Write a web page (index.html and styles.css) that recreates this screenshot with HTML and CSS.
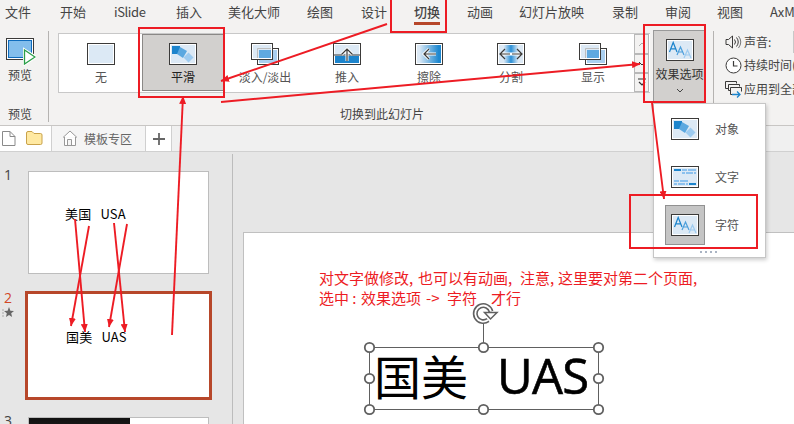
FILE: index.html
```html
<!DOCTYPE html>
<html lang="zh-CN">
<head>
<meta charset="utf-8">
<title>切换</title>
<link rel="stylesheet" href="styles.css">
</head>
<body>
<svg class="defs" width="0" height="0">
  <defs>
    <linearGradient id="wipe"><stop offset=".1" stop-color="#dce9f5"/><stop offset=".9" stop-color="#1e88d0"/></linearGradient>
    <linearGradient id="split"><stop offset="0" stop-color="#dce9f5"/><stop offset=".2" stop-color="#dce9f5"/><stop offset=".5" stop-color="#2a8fd6"/><stop offset=".8" stop-color="#dce9f5"/><stop offset="1" stop-color="#dce9f5"/></linearGradient>
    <marker id="head" viewBox="0 0 8 7" refX="8" refY="3.500" markerWidth="8" markerHeight="7" markerUnits="userSpaceOnUse" orient="auto"><path d="M0 0L8 3.500L0 7z" fill="#ed1c24"/></marker>
    <symbol id="frame" viewBox="0 0 28 22"><rect x=".5" y=".5" width="27" height="21" fill="#fff" stroke="#3b3a39"/><rect x="2" y="2" width="24" height="18" fill="#dce9f5"/></symbol>
    <symbol id="morph" viewBox="0 0 28 22"><use href="#frame" width="28" height="22"/><path d="M3 3h8v8H3z" fill="#1c84cc"/><path d="M11 4l7 4-4 7-6-4z" fill="#5ba8e0"/><path d="M19.500 9.500l5 5-5 5-5-5z" fill="#9dcbf0"/></symbol>
    <symbol id="chars" viewBox="0 0 28 22"><use href="#frame" width="28" height="22"/><g fill="none" stroke-width="1.200"><path d="M3.500 13L7.200 3.500L11 13M5 9.800h4.500" stroke="#1c84cc"/><path d="M11 16L14.500 8L18 16M12.500 13h4" stroke="#4c9fdc"/><path d="M18 19L21.500 11L25 19M19.500 16h4" stroke="#9dcbf0"/></g></symbol>
    <symbol id="lines" viewBox="0 0 28 22"><use href="#frame" width="28" height="22"/><path d="M3 3h7v2H3zM18 17h7v2h-7z" fill="#1c84cc"/><path d="M11 3h5v2h-5zM17 3h8v2h-8zM11 6h3v2h-3zM15 6h7v2h-7zM23 6h2v2h-2zM3 14h5v2H3zM9 14h8v2H9zM3 17h3v2H3zM7 17h7v2H7zM15 17h2v2h-2z" fill="#8cc1ee"/></symbol>
    <symbol id="fade" viewBox="0 0 28 22"><rect x="6.500" y="5.500" width="21" height="16" fill="#fff" stroke="#3b3a39"/><rect x="8" y="7" width="18" height="13" fill="#a9cff0"/><rect x=".5" y=".5" width="21" height="16" fill="#fff" stroke="#3b3a39"/><rect x="2" y="2" width="18" height="13" fill="#dce9f5"/><path d="M6.500 15V5.500H20" fill="none" stroke="#bdbdbd"/><rect x="8" y="7" width="12" height="8" fill="#5fa9e0"/></symbol>
  </defs>
</svg>
<div class="app">
  <header class="ribbon">
    <nav class="tabs">
      <span>文件</span><span>开始</span><span class="latin">iSlide</span><span>插入</span><span>美化大师</span><span>绘图</span><span>设计</span><span><b class="active">切换</b></span><span>动画</span><span>幻灯片放映</span><span>录制</span><span>审阅</span><span>视图</span><span>AxMath</span>
    </nav>
    <div class="tools">
      <section class="preview">
        <svg width="30" height="28" viewBox="0 0 30 28"><rect x=".5" y=".5" width="27" height="21" fill="#fff" stroke="#3b3a39"/><rect x="2.500" y="2.500" width="23" height="17" fill="#83beec" stroke="#0f6cbd"/><path d="M18.500 12v14l11-7z" fill="#fff" stroke="#fff" stroke-width="3"/><path d="M18.500 12v14l10.500-7z" fill="#fff" stroke="#2b9f48" stroke-width="1.300"/></svg>
        <span>预览</span>
        <span class="caption">预览</span>
      </section>
      <section class="transitions">
        <div class="gallery">
          <div class="effect"><svg width="28" height="22"><use href="#frame"/></svg><span>无</span></div>
          <div class="effect selected"><svg width="28" height="22"><use href="#morph"/></svg><span>平滑</span></div>
          <div class="effect"><svg width="28" height="22"><use href="#fade"/></svg><span>淡入/淡出</span></div>
          <div class="effect"><svg width="28" height="22"><use href="#frame"/><path d="M2 13h24v7H2z" fill="#1c84cc"/><path d="M1 12h26" stroke="#3b3a39"/><path d="M14 18V6M8.500 11.500L14 6l5.500 5.500" fill="none" stroke="#fff" stroke-width="3"/><path d="M14 18V6M8.500 11.500L14 6l5.500 5.500" fill="none" stroke="#3b3a39" stroke-width="1.200"/></svg><span>推入</span></div>
          <div class="effect"><svg width="28" height="22"><use href="#frame"/><path d="M2 2h24v18H2z" fill="url(#wipe)"/><path d="M21 11H9M14 6L9 11l5 5" fill="none" stroke="#fff" stroke-width="3"/><path d="M21 11H9M14 6L9 11l5 5" fill="none" stroke="#3b3a39" stroke-width="1.200"/></svg><span>擦除</span></div>
          <div class="effect"><svg width="28" height="22"><use href="#frame"/><path d="M2 2h24v18H2z" fill="url(#split)"/><path d="M3 11h22" stroke="#fff" stroke-width="3"/><path d="M13 11H3M8 6l-5 5 5 5M15 11h10M20 6l5 5-5 5" fill="none" stroke="#3b3a39" stroke-width="1.200"/></svg><span>分割</span></div>
          <div class="effect"><svg width="28" height="22"><use href="#fade"/></svg><span>显示</span></div>
          <div class="scroller">
            <i><svg width="8" height="6"><path d="M1 5l3-3 3 3" fill="none" stroke="#aaa"/></svg></i>
            <i><svg width="8" height="6"><path d="M1 1l3 3 3-3" fill="none" stroke="#333"/></svg></i>
            <i><svg width="8" height="9"><path d="M0 1h8M1 4l3 3 3-3" fill="none" stroke="#333" stroke-width="1.200"/></svg></i>
          </div>
        </div>
        <span class="caption">切换到此幻灯片</span>
      </section>
      <section class="options"><svg width="28" height="22"><use href="#chars"/></svg><span>效果选项</span><svg width="8" height="5"><path d="M1 1l3 3 3-3" fill="none" stroke="#444"/></svg></section>
      <section class="timing">
        <div><svg width="17" height="16" viewBox="0 0 17 16" fill="none" stroke="#3b3a39"><path d="M1 5.500h2.500L7.500 2v12L3.500 10.500H1z"/><path d="M9.500 5.500q2 2.500 0 5M11.500 3.500q3.500 4.500 0 9"/><path d="M13.500 2q4.500 6 0 12" stroke="#777"/></svg><span>声音:</span><i class="field"></i></div>
        <div><svg width="17" height="17" viewBox="0 0 17 17" fill="none" stroke="#3b3a39"><circle cx="8.500" cy="8.500" r="7.500" fill="#fff"/><path d="M8.500 4v5h4" stroke-width="1.200"/></svg><span>持续时间(D):</span></div>
        <div><svg width="17" height="17" viewBox="0 0 17 17" fill="none"><path d="M3.500 7.500h-3v-7h11v2M6 9.500H3.500v-6h11v2M8 13.500H5.500v-7h11v4" stroke="#3b3a39"/><path d="M7 13.500h8M12 10.500l3 3-3 3" stroke="#1c84cc" stroke-width="1.300"/></svg><span>应用到全部</span></div>
      </section>
    </div>
  </header>
  <div class="docs">
    <div class="files">
      <svg width="14" height="17" viewBox="0 0 14 17" fill="#fff" stroke="#8a8a8a"><path d="M.5 1.500h7.500l5 5v9H.5zM8 1.500v5h5"/></svg>
      <svg width="17" height="15" viewBox="0 0 17 15"><path d="M.5 2q0-1.500 1.500-1.500h4l2 2h6.500q1.500 0 1.500 1.500v8q0 1.500-1.500 1.500H2Q.5 13.500.5 12z" fill="#ffe9a2" stroke="#c9a24a"/></svg>
    </div>
    <div class="doc"><svg width="16" height="17" viewBox="0 0 16 17" fill="#fff" stroke="#999"><path d="M1 7.500L8 1l7 6.500M2.500 7v8.500h11V7M5.500 15.500v-6h4v6"/></svg><span>模板专区</span></div>
    <div class="plus"><svg width="12" height="12"><path d="M6 0v12M0 6h12" stroke="#666" stroke-width="1.800"/></svg></div>
  </div>
  <main class="workspace">
    <aside class="slides">
      <div class="row first"><span class="num">1</span><div class="thumb"><p><span>美国</span><span>USA</span></p></div></div>
      <div class="row second"><span class="num">2<svg width="12" height="11" viewBox="0 0 12 11"><path d="M7 0l1.400 3.700 3.600.2-2.800 2.300.9 3.800L7 8l-3 2 .8-3.800L2 3.900l3.600-.2z" fill="#666"/><path d="M0 3h2M0 6h2M0 9h2" stroke="#aaa"/></svg></span><div class="thumb"><p><span>国美</span><span>UAS</span></p></div></div>
      <div class="row third"><span class="num">3</span><div class="thumb"><i class="dark"></i></div></div>
    </aside>
    <div class="stage">
      <div class="page">
        <div class="note"><span>对文字做修改,</span><span>也可以有动画,</span><span>注意,</span><span>这里要对第二个页面,</span></div>
        <div class="note second-line"><span>选中 :</span><span>效果选项</span><span>-&gt;</span><span>字符</span><span>才行</span></div>
        <div class="textbox"><span class="han">国美</span><span class="roman">UAS</span></div>
      </div>
    </div>
  </main>
  <div class="menu">
    <div><i><svg width="28" height="22"><use href="#morph"/></svg></i><span>对象</span></div>
    <div><i><svg width="28" height="22"><use href="#lines"/></svg></i><span>文字</span></div>
    <div><i class="chosen"><svg width="28" height="22"><use href="#chars"/></svg></i><span>字符</span></div>
    <svg class="grip" width="18" height="2"><path d="M0 1h18" stroke="#aab4c4" stroke-width="2" stroke-dasharray="2 3"/></svg>
  </div>
  <svg class="overlay" width="794" height="424" fill="none">
    <g stroke="#606060"><path d="M483.500 324v24M369.500 347.500h229v62h-229z"/>
      <g fill="#fff" stroke-width="1.800"><circle cx="369.500" cy="347.500" r="4.700"/><circle cx="483.500" cy="347.500" r="4.700"/><circle cx="598.500" cy="347.500" r="4.700"/><circle cx="369.500" cy="378.500" r="4.700"/><circle cx="598.500" cy="378.500" r="4.700"/><circle cx="369.500" cy="409.500" r="4.700"/><circle cx="483.500" cy="409.500" r="4.700"/><circle cx="598.500" cy="409.500" r="4.700"/></g>
      <path d="M488 320A8 8 0 1 1 491 311.500" stroke-width="5"/><path d="M488 320A8 8 0 1 1 491 311.500" stroke="#fff" stroke-width="1.800"/><path d="M484.500 312.500h12.500l-6.500 6.500z" fill="#fff" stroke-width="1.500"/>
    </g>
    <g stroke="#ed1c24" stroke-width="2">
      <path d="M391-2v34h55V-2zM139 28h85v69h-85zM644 25h61v77h-61zM630 195h127v53H630z"/>
      <g stroke-width="1.900">
        <path d="M387 24L221 81" marker-end="url(#head)"/><path d="M221 102L640 64" marker-end="url(#head)"/><path d="M172 335L183 96" marker-end="url(#head)"/><path d="M652 103L664 199" marker-end="url(#head)"/><path d="M75 219L85 332" marker-end="url(#head)"/><path d="M89 226L71 326" marker-end="url(#head)"/><path d="M114 223L125 332" marker-end="url(#head)"/><path d="M127 224L109 327" marker-end="url(#head)"/>
      </g>
    </g>
  </svg>
</div>
</body>
</html>
```
FILE: styles.css
```css
* { box-sizing: border-box; }
body { margin: 0; font: 12px/16px "Noto Sans CJK SC", sans-serif; color: #444; }
svg { display: block; flex: none; }
.defs { position: absolute; }
.app { position: relative; width: 794px; height: 424px; overflow: hidden; background: #e6e6e6; }
span { white-space: nowrap; }

.ribbon { height: 126px; background: #f3f2f1; border-bottom: 1px solid #c8c6c4; }
.tabs { display: grid; grid-template-columns: 55px 54px 62px 52px 79px 54px 53px 53px 52px 93px 53px 52px 53px 60px; height: 30px; padding: 4px 0 0 5px; font-size: 13px; }
.tabs .latin { letter-spacing: -.4px; }
.active { display: inline-block; height: 21px; border-bottom: 3px solid #b7472a; font-weight: 500; }
.tools { display: flex; height: 95px; }
.tools section { flex: none; }
.preview { display: flex; flex-direction: column; align-items: flex-start; width: 49px; height: 91px; margin-top: 1px; padding: 7px 0 0 6px; border-right: 1px solid #b5b3b1; }
.preview span { margin: 1px 0 0 2px; }
.preview .caption { margin-top: 23px; }
.transitions { width: 592px; margin: 3px 0 0 9px; }
.gallery { display: grid; grid-template-columns: repeat(7, 82px) 15px; height: 60px; padding-left: 1px; border: 1px solid #c8c8c8; border-right: 0; background: #fff; }
.effect { display: flex; flex-direction: column; align-items: center; gap: 4px; padding-top: 9px; color: #555; }
.effect.selected { margin-bottom: 1px; padding-top: 8px; border: 1px solid #8a8886; background: #d2d0ce; color: #222; }
.scroller { display: grid; grid-template-rows: 20px 19px 19px; margin-left: 0; }
.scroller i { display: grid; place-items: center; border: 1px solid #b8b8b8; background: #f3f2f1; }
.transitions .caption { display: block; margin: 13px 0 0 282px; }
.options { display: flex; flex-direction: column; align-items: center; width: 53px; height: 73px; margin-left: 3px; padding-top: 8px; border: 1px solid #999; background: #d2d0ce; }
.options span { margin: 5px 0 6px; color: #333; }
.timing { width: 90px; height: 91px; margin: 1px 0 0 7px; padding-left: 11px; border-left: 1px solid #b5b3b1; }
.timing div { display: flex; align-items: center; gap: 2px; height: 24px; }
.timing div:first-child { height: 22px; }
.field { width: 20px; height: 22px; margin-left: 20px; border: 1px solid #c8c8c8; background: #e6e6e6; }

.docs { display: flex; height: 26px; border-bottom: 1px solid #d0d0d0; background: #f0f0f0; }
.files { display: flex; align-items: center; gap: 10px; width: 52px; padding-left: 2px; border-right: 1px solid #d0d0d0; background: #fff; }
.doc { display: flex; align-items: center; gap: 6px; width: 94px; padding-left: 10px; border-right: 1px solid #d0d0d0; background: #f5f5f5; color: #666; }
.plus { display: grid; place-items: center; width: 26px; border-right: 1px solid #d0d0d0; background: #fff; }

.workspace { display: flex; height: 272px; }
.slides { width: 233px; height: 270px; margin-top: 2px; padding-top: 17px; border-right: 1px solid #bcbcbc; }
.row { display: flex; }
.num { width: 28px; padding-left: 4px; font: 14px/16px "Open Sans", sans-serif; }
.first .num { margin-top: -4px; }
.num svg { margin: 1px 0 0 -2px; }
.thumb { width: 181px; height: 103px; border: 1px solid #bdbdbd; background: #fff; }
.thumb p { display: flex; gap: 9px; margin: 33px 0 0 36px; font-size: 13px; line-height: 18px; color: #000; letter-spacing: .2px; }
.second { margin-top: 17px; }
.second .num { width: 25px; margin-top: -1px; color: #d24726; }
.second .thumb { width: 187px; height: 109px; border: 3px solid #b7472a; }
.second .thumb p { margin: 34px 0 0 38px; }
.third { margin-top: 17px; }
.third .num { margin-top: -4px; }
.dark { display: block; width: 101px; height: 30px; background: linear-gradient(#111, #2a2a2a); }
.stage { flex: 1; padding: 80px 0 0 10px; }
.page { height: 192px; padding: 35px 0 0 75px; border: 1px solid #c0c0c0; border-width: 1px 0 0 1px; background: #fff; }
.note { display: grid; grid-template-columns: 99px 102px 38px auto; height: 20px; font-size: 15px; line-height: 20px; color: #ed1c24; }
.second-line { grid-template-columns: 42px 65px 21px 44px auto; }
.textbox { display: flex; align-items: center; width: 230px; height: 62px; margin: 36px 0 0 50px; padding-left: 5px; color: #000; line-height: 60px; }
.han { width: 123px; font-size: 47px; }
.roman { font: 49px/60px "Open Sans", sans-serif; letter-spacing: -.7px; -webkit-text-stroke: .6px #000; }

.menu { position: absolute; left: 653px; top: 103px; width: 113px; height: 155px; padding: 1px 0 0 11px; border: 1px solid #c6c6c6; background: #fff; box-shadow: 1px 2px 4px rgba(0, 0, 0, .2); }
.menu div { display: flex; align-items: center; gap: 10px; height: 48px; color: #555; }
.menu i { display: grid; place-items: center; width: 40px; height: 40px; }
.menu .chosen { border: 1px solid #919191; background: #c5c5c5; }
.grip { margin: 2px 0 0 35px; }
.overlay { position: absolute; left: 0; top: 0; }
```
